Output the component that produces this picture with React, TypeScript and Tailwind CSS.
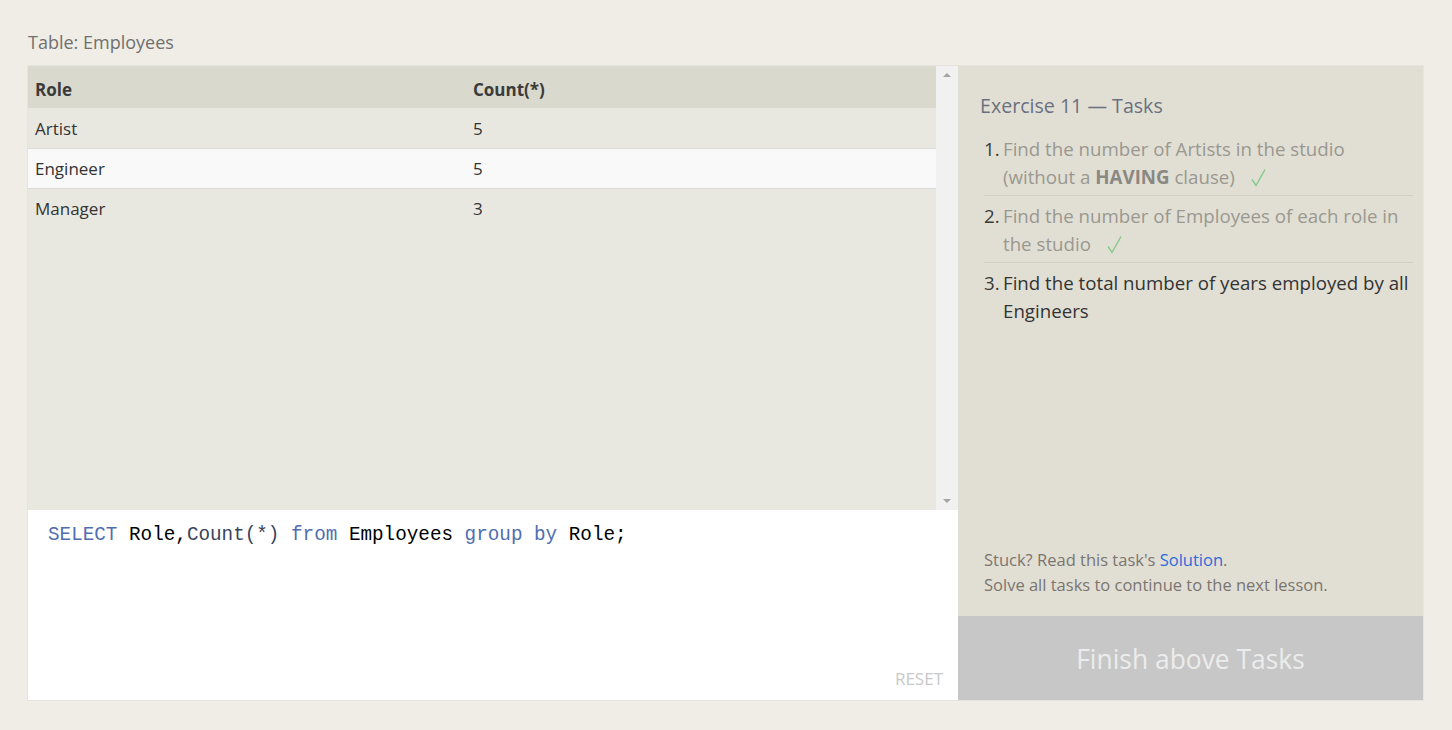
const rows = [
  { role: "Artist", count: 5 },
  { role: "Engineer", count: 5 },
  { role: "Manager", count: 3 },
];

const Check = () => (
  <svg className="ml-[16px] inline-block align-[-3px]" width="15" height="19" viewBox="0 0 15 19" fill="none">
    <path d="M1 11.5 L5 17.5 L14 1.5" stroke="#84c88a" strokeWidth="1.4" />
  </svg>
);

const App = () => {
  return (
    <div className="min-h-screen bg-[#efede5] pl-[28px] pt-[29px] font-['Open_Sans',sans-serif]">
      <div className="h-[37px] text-[18px] text-[#707070]">Table: Employees</div>
      <div className="flex w-[1395px] shadow-[0_0_0_1px_#e6e4dc]">
        {/* left: results + editor */}
        <div className="flex w-[930px] flex-col">
          <div className="flex h-[444px] bg-[#e9e8e0]">
            <table className="w-[908px] self-start border-collapse text-left text-[17px] text-[#333]">
              <thead>
                <tr className="h-[42px] bg-[#d9d9cd]">
                  <th className="w-[438px] px-[7px] pt-[5px] font-bold text-[#3b3b3b]">Role</th>
                  <th className="px-[7px] pt-[5px] font-bold text-[#3b3b3b]">Count(*)</th>
                </tr>
              </thead>
              <tbody>
                {rows.map((r, i) => (
                  <tr key={r.role} className={`h-[40px] border-b border-[#dcdcd8] last:border-b-0 ${i === 1 ? "bg-[#f9f9f9]" : ""}`}>
                    <td className="px-[7px] pt-[1px]">{r.role}</td>
                    <td className="px-[7px] pt-[1px]">{r.count}</td>
                  </tr>
                ))}
              </tbody>
            </table>
            <div className="flex w-[22px] flex-col items-center justify-between bg-[#f1f1f1] py-[7px]">
              <div className="h-0 w-0 border-x-[4px] border-b-[4px] border-x-transparent border-b-[#a3a3a3]" />
              <div className="h-0 w-0 border-x-[4px] border-t-[4px] border-x-transparent border-t-[#a3a3a3]" />
            </div>
          </div>
          <div className="flex h-[190px] flex-col justify-between bg-white pl-[20px] pr-[15px] pt-[11px] pb-[9px]">
            <div className="font-['Liberation_Mono',monospace] text-[19.3px] text-black">
              <span className="text-[#4f6eb0]">SELECT</span> Role,<span className="text-[#39435a]">Count(*)</span>{" "}
              <span className="text-[#4f6eb0]">from</span> Employees <span className="text-[#4f6eb0]">group</span>{" "}
              <span className="text-[#4f6eb0]">by</span> Role;
            </div>
            <div className="self-end text-[17px] text-[#c9c9c9]">RESET</div>
          </div>
        </div>

        {/* right: tasks */}
        <div className="flex w-[465px] flex-col">
          <div className="flex flex-1 flex-col justify-between bg-[#e1dfd4] pl-[22px] pr-[10px] pt-[25px] pb-[19px]">
            <div>
              <h2 className="text-[19.6px] text-[#6b7080]">Exercise 11 — Tasks</h2>
              <ol className="mt-[15px] pl-[4px] text-[18.7px] leading-[28px]">
                <li className="flex border-b border-[#d2d0c6] pb-[4px]">
                  <span className="w-[19px] shrink-0 text-[#3a3a3a]">1.</span>
                  <span className="text-[#9a9890]">
                    Find the number of Artists in the studio (without a <b className="text-[#8a8883]">HAVING</b> clause)
                    <Check />
                  </span>
                </li>
                <li className="flex border-b border-[#d2d0c6] pt-[6px] pb-[4px]">
                  <span className="w-[19px] shrink-0 text-[#3a3a3a]">2.</span>
                  <span className="text-[#9a9890]">
                    Find the number of Employees of each role in the studio
                    <Check />
                  </span>
                </li>
                <li className="flex pt-[6px]">
                  <span className="w-[19px] shrink-0 text-[#3a3a3a]">3.</span>
                  <span className="text-[#333]">Find the total number of years employed by all Engineers</span>
                </li>
              </ol>
            </div>
            <div className="pl-[4px] text-[16.5px] leading-[25px] text-[#7a7570]">
              <div>
                Stuck? Read this task's <span className="text-[#2d6bd9]">Solution</span>.
              </div>
              <div>Solve all tasks to continue to the next lesson.</div>
            </div>
          </div>
          <button className="h-[84px] bg-[#c7c7c7] pt-[4px] text-[26.4px] text-[#ececec]">Finish above Tasks</button>
        </div>
      </div>
    </div>
  );
};

export default App;
